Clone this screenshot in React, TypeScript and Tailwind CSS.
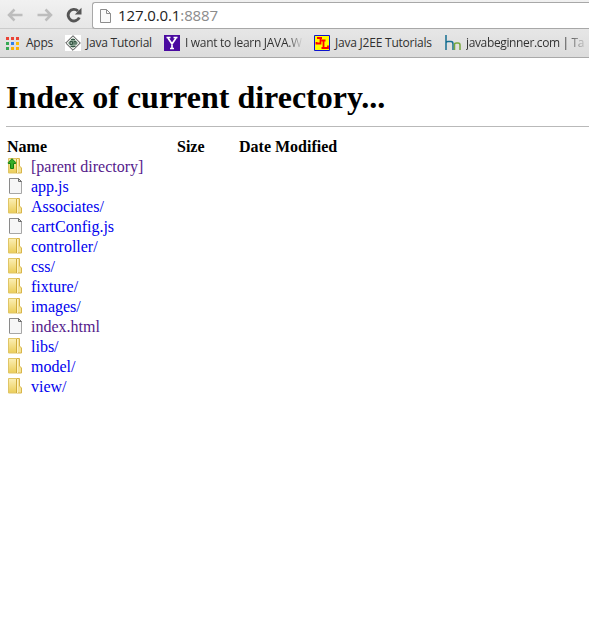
import type { ReactNode } from "react";

type Kind = "parent" | "file" | "folder";

const entries: { name: string; kind: Kind; visited?: boolean }[] = [
  { name: "[parent directory]", kind: "parent", visited: true },
  { name: "app.js", kind: "file" },
  { name: "Associates/", kind: "folder" },
  { name: "cartConfig.js", kind: "file" },
  { name: "controller/", kind: "folder" },
  { name: "css/", kind: "folder" },
  { name: "fixture/", kind: "folder" },
  { name: "images/", kind: "folder" },
  { name: "index.html", kind: "file", visited: true },
  { name: "libs/", kind: "folder" },
  { name: "model/", kind: "folder" },
  { name: "view/", kind: "folder" },
];

function EntryIcon({ kind }: { kind: Kind }) {
  if (kind === "file") {
    return (
      <svg width="16" height="16" viewBox="0 0 16 16" className="block">
        <path d="M2.500.5h9l3 3v12h-12z" fill="#f6f6f6" stroke="#a6a6a6" />
        <path d="M2.500 15V.5h8.500" fill="none" stroke="#8a8a8a" />
        <path d="M11.500 .5v3h3z" fill="#ddd" stroke="#6c6c6c" />
      </svg>
    );
  }
  return (
    <svg width="16" height="16" viewBox="0 0 16 16" className="block">
      <defs>
        <linearGradient id="fold" x1="0" y1="0" x2="0" y2="1">
          <stop offset="0" stopColor="#fbefb5" />
          <stop offset="1" stopColor="#ebcd58" />
        </linearGradient>
      </defs>
      <path d="M9.500.5h3v7.500l2 2v5h-5z" fill="#f5e292" stroke="#d8b54a" />
      <path d="M1.500.5h8v14.500h-8z" fill="url(#fold)" stroke="#e0c566" />
      <path d="M9.500 1v14" fill="none" stroke="#cfab3c" />
      <path d="M10.500 1v14" fill="none" stroke="#fff3c0" />
      {kind === "parent" && (
        <path d="M5 .7L8.700 4.500v1H6.500v5h-3v-5H1.300v-1z" fill="#35ad27" stroke="#12800e" />
      )}
    </svg>
  );
}

function Bookmark({ icon, children, className }: { icon: ReactNode; children: ReactNode; className: string }) {
  return (
    <div className={`flex h-full shrink-0 items-center ${className}`}>
      {icon}
      {children}
    </div>
  );
}

const appColors = ["#ea4335", "#ea4335", "#ea4335", "#34a853", "#2f7fed", "#fbbc05", "#34a853", "#fbb005", "#fbb005"];

export default function App() {
  return (
    <div className="h-[638px] w-full overflow-hidden bg-white font-['Liberation_Serif',serif] text-black">
      <div className="h-[58px] overflow-hidden border-b border-[#a9a9a9] bg-linear-to-b from-[#f1f1f1] to-[#dcdcdc] font-['Open_Sans',sans-serif]">
        <div className="flex h-[29px] items-start border-b border-[#cbcbcb]">
          <div className="flex h-full items-center pt-[2px] pl-[7px]">
            <svg width="16" height="16" viewBox="0 0 16 16" fill="none" stroke="#bdbdbd" strokeWidth="2.500">
              <path d="M15.500 8H2M7.500 2.500L2 8l5.500 5.500" />
            </svg>
            <svg width="16" height="16" viewBox="0 0 16 16" fill="none" stroke="#bdbdbd" strokeWidth="2.500" className="ml-[14px]">
              <path d="M.5 8H14M8.500 2.500L14 8l-5.500 5.500" />
            </svg>
            <svg width="16" height="16" viewBox="0 0 16 16" fill="none" className="ml-[13px]">
              <path d="M13.300 10.500A5.800 5.800 0 1 1 12 4" stroke="#555" strokeWidth="2.900" />
              <path d="M15.500 .8v6.700H8.800z" fill="#555" />
            </svg>
          </div>
          <div className="mt-[2px] ml-[10px] flex h-[27px] flex-1 items-center rounded-l-[3px] border border-r-0 border-[#a8a8a8] bg-white pl-[6px]">
            <svg width="13" height="16" viewBox="0 0 13 16" fill="none" stroke="#8c8c8c">
              <path d="M1.500 1.500h6l4 4v9h-10z" fill="#fafafa" />
              <path d="M7.500 1.500v4h4" />
            </svg>
            <span className="ml-[6px] pb-px text-[15px] leading-[20px] tracking-[-0.11px] whitespace-nowrap text-[#222]">
              127.0.0.1<span className="text-[#8b8b8b]">:8887</span>
            </span>
          </div>
        </div>
        <div className="flex h-[28px] text-[12px] leading-[16px] whitespace-nowrap text-[#303030]">
          <Bookmark
            className="w-[59px] pl-[6px]"
            icon={
              <svg width="13" height="13" viewBox="0 0 13 13" className="mr-[7px] shrink-0">
                {appColors.map((c, i) => (
                  <rect key={i} x={(i % 3) * 5} y={Math.floor(i / 3) * 5} width="3" height="3" fill={c} />
                ))}
              </svg>
            }
          >
            <span className="tracking-[-0.25px]">Apps</span>
          </Bookmark>
          <Bookmark
            className="w-[99px] pl-[6px]"
            icon={
              <svg width="16" height="16" viewBox="0 0 16 16" className="mr-[5px] shrink-0">
                <path d="M0 0h16v16H0z" fill="#fff" />
                <path d="M8 .7L15.300 8 8 15.300.7 8z" fill="#e5e8e5" stroke="#4b4b4b" />
                <path d="M8 3l5 5-5 5-5-5z" fill="#8fa998" />
                <path d="M5 6.500h2.500v3H5zM9 9.500v-3h2v3M5.500 11.500h5M6 4.500h4" stroke="#365644" fill="none" />
              </svg>
            }
          >
            <span className="tracking-[-0.22px]">Java Tutorial</span>
          </Bookmark>
          <Bookmark
            className="w-[144px] pl-[6px]"
            icon={
              <svg width="16" height="16" viewBox="0 0 16 16" className="mr-[5px] shrink-0">
                <path d="M0 0h16v16H0z" fill="#4a0aa0" />
                <path d="M2.500 2.500h4M9.500 2.500h4M4 3l4 6 4-6M8 8.500V13M6 13.500h4" fill="none" stroke="#fff" strokeWidth="1.700" />
              </svg>
            }
          >
            <span className="bg-linear-to-r from-[#303030] from-88% to-[#30303010] bg-clip-text tracking-[-0.3px] text-transparent">
              I want to learn JAVA.W
            </span>
          </Bookmark>
          <Bookmark
            className="w-[137px] pl-[12px]"
            icon={
              <svg width="16" height="16" viewBox="0 0 16 16" className="mr-[5px] shrink-0">
                <path d="M.5.5h15v15H.5z" fill="#ff0" stroke="#0c13cf" />
                <path d="M3 3h5M6.500 3v5.500H2.500V7M7.500 5.500h4M9.500 6v6.500M7.500 13h6.500v-2.500" fill="none" stroke="#f00" strokeWidth="1.800" />
              </svg>
            }
          >
            <span className="tracking-[-0.22px]">Java J2EE Tutorials</span>
          </Bookmark>
          <Bookmark
            className="w-[150px] pl-[6px]"
            icon={
              <svg width="16" height="16" viewBox="0 0 16 16" className="mr-[5px] shrink-0" fill="none" strokeWidth="1.500">
                <path d="M1 0v15M1 9V8q0-1.500 2-1.500h3Q8 6.500 8 9v6" stroke="#166f91" />
                <path d="M9.500 15V9.500Q9.500 8 11.500 8h1.500q2 0 2 2v5" stroke="#76a83c" />
              </svg>
            }
          >
            <span className="bg-linear-to-r from-[#303030] from-84% to-[#30303030] bg-clip-text tracking-[-0.36px] text-transparent">
              javabeginner.com | Ta
            </span>
          </Bookmark>
        </div>
      </div>
      <main className="pt-[21px] pl-[6px]">
        <h1 className="h-[48px] border-b border-[#b9b9b9] text-[32px] leading-[37px] font-bold whitespace-nowrap">
          Index of current directory...
        </h1>
        <table className="mt-[10px] ml-px table-fixed border-collapse text-[16px] leading-[20px]">
          <thead>
            <tr className="h-[20px] text-left">
              <th className="w-[170px] p-0">Name</th>
              <th className="w-[62px] p-0">Size</th>
              <th className="w-[110px] p-0">Date Modified</th>
            </tr>
          </thead>
          <tbody>
            {entries.map((e) => (
              <tr key={e.name} className="h-[20px]">
                <td className="p-0">
                  <div className="flex h-[20px] items-center">
                    <div className="mr-2 pb-[2px]"><EntryIcon kind={e.kind} /></div>
                    <a className={e.visited ? "text-[#551a8b]" : "text-[#0000ee]"}>{e.name}</a>
                  </div>
                </td>
                <td className="p-0" />
                <td className="p-0" />
              </tr>
            ))}
          </tbody>
        </table>
      </main>
    </div>
  );
}
